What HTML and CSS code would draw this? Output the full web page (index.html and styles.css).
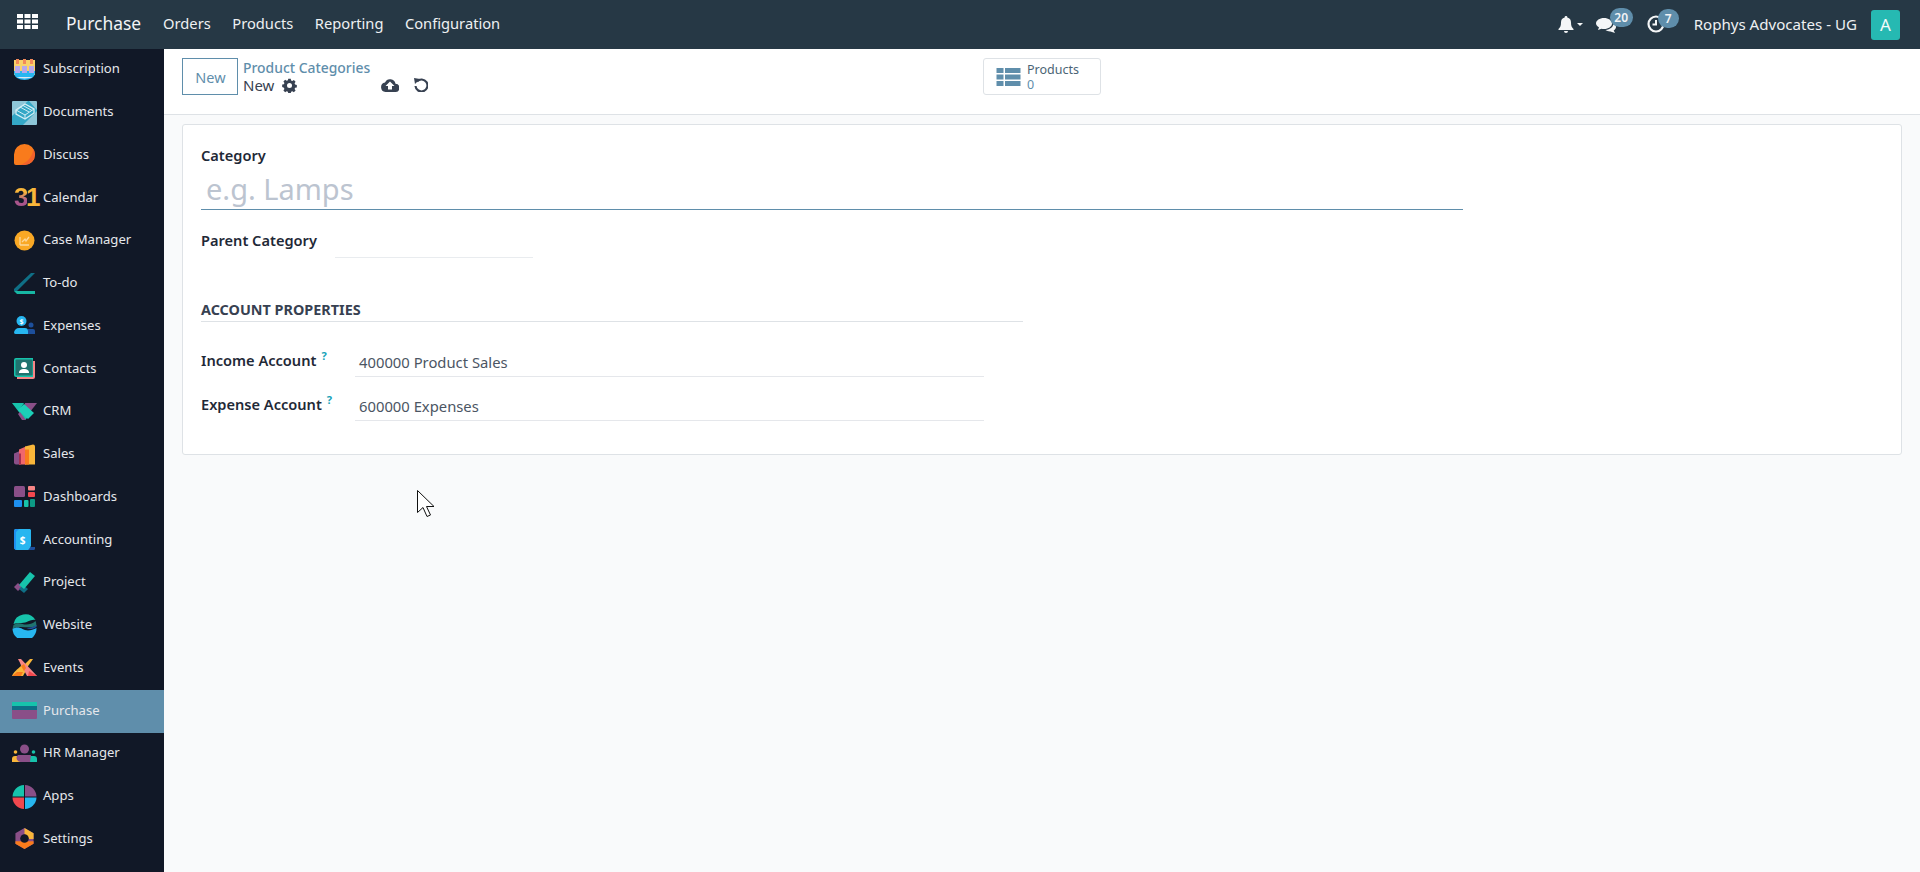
FILE: index.html
```html
<!DOCTYPE html>
<html lang="en">
<head>
<meta charset="utf-8">
<title>Product Categories</title>
<link rel="stylesheet" href="styles.css">
</head>
<body>
<header class="topbar">
  <svg class="apps" viewBox="0 0 21 15" width="21" height="15"><g fill="#fff"><rect x="0" y="0" width="6" height="4"/><rect x="7.500" y="0" width="6" height="4"/><rect x="15" y="0" width="6" height="4"/><rect x="0" y="5.500" width="6" height="4"/><rect x="7.500" y="5.500" width="6" height="4"/><rect x="15" y="5.500" width="6" height="4"/><rect x="0" y="11" width="6" height="4"/><rect x="7.500" y="11" width="6" height="4"/><rect x="15" y="11" width="6" height="4"/></g></svg>
  <span class="brand">Purchase</span>
  <nav class="topnav"><span>Orders</span><span>Products</span><span>Reporting</span><span>Configuration</span></nav>
  <div class="systray">
    <svg class="bell" viewBox="0 0 16 17" width="16" height="17"><path fill="#f4f6f7" d="M8 0a1.300 1.300 0 0 1 1.300 1.500C12 2.100 13 4.200 13 6.500c0 3.500.8 5 2.500 6.500v1H.5v-1C2.200 11.500 3 10 3 6.500c0-2.300 1-4.400 3.700-5A1.300 1.300 0 0 1 8 0zM6 15h4a2 2 0 0 1-4 0z"/></svg>
    <span class="caret"></span>
    <span class="tray-item msg">
      <svg viewBox="0 0 22 17" width="22" height="17"><path fill="#f4f6f7" d="M8 2c4.400 0 8 2.400 8 5.500S12.400 13 8 13c-.9 0-1.700-.1-2.500-.3L2 14l1-2.700C1.200 10.300 0 9 0 7.500 0 4.400 3.600 2 8 2z"/><path fill="#f4f6f7" d="M17.500 7c.2 3.600-3.300 6.600-8 7 1.200 1 3 1.500 5 1.400l4.500 1.600-1.300-2.600c1.500-.9 2.300-2.100 2.300-3.400 0-1.600-1-2.900-2.500-4z"/></svg>
      <b class="badge b20">20</b>
    </span>
    <span class="tray-item act">
      <svg viewBox="0 0 18 18" width="18" height="18"><circle cx="9" cy="9" r="7.500" fill="none" stroke="#f4f6f7" stroke-width="2.200"/><path d="M9 5v4.500H5.500" fill="none" stroke="#f4f6f7" stroke-width="2"/></svg>
      <b class="badge b7">7</b>
    </span>
    <span class="company">Rophys Advocates - UG</span>
    <span class="avatar">A</span>
  </div>
</header>
<div class="main">
  <aside class="sidebar">
    <a class="app"><svg viewBox="0 0 21 21"><rect x="0" y="1" width="21" height="15" fill="#f8d26a"/><path d="M0 12h21v2a10.500 7 0 0 1-21 0z" fill="#27b6f0"/><path d="M2 18h17a10 3 0 0 1-17 0z" fill="#dfe8ee"/><g fill="#b6a8ec"><rect x="1" y="7" width="5" height="7"/><rect x="8" y="7" width="5" height="7"/><rect x="15" y="7" width="5" height="7"/></g><g fill="#f28a5b"><rect x="2" y="0" width="3" height="5"/><rect x="9" y="0" width="3" height="5"/><rect x="16" y="0" width="3" height="5"/></g></svg><span>Subscription</span></a>
    <a class="app"><svg class="wide tall" viewBox="0 0 25 24"><rect width="25" height="24" rx="1" fill="#8ec6d8"/><path d="M0 24V15L16 0h1l8 9v1L11 24z" fill="#34a7c6"/><path d="M4 9l9-6 9 5v4l-9 6-9-5z" fill="none" stroke="#d4eef5" stroke-width="1.300"/><path d="M4 9l9 5 9-6M13 14v4M8 6l9 5M11 4.500l9 5" fill="none" stroke="#d4eef5" stroke-width="1"/></svg><span>Documents</span></a>
    <a class="app"><svg viewBox="0 0 21 21"><path d="M10.500 0A10.500 10.500 0 0 1 21 10.500 10.500 10.500 0 0 1 10.500 21H2a2 2 0 0 1-2-2v-8.500A10.500 10.500 0 0 1 10.500 0z" fill="#f97b1c"/><path d="M21 10.500A10.500 10.500 0 0 1 10.500 21H5C12 20 18 14 19.500 5a10 10 0 0 1 1.500 5.500z" fill="#f2612b"/></svg><span>Discuss</span></a>
    <a class="app"><span class="cal"><i>3</i><em>1</em></span><span>Calendar</span></a>
    <a class="app"><svg viewBox="0 0 21 21"><circle cx="10.500" cy="10.500" r="10" fill="#f9a825"/><path d="M6 15V7M6 15h9M8 12l3-3 1 2 3-4" fill="none" stroke="#fcd79a" stroke-width="1.300"/></svg><span>Case Manager</span></a>
    <a class="app"><svg viewBox="0 0 21 21"><path d="M17 0h4L3 18H0v-2z" fill="#0f6f86"/><path d="M0 18h21v3H3z" fill="#17b7a4"/></svg><span>To-do</span></a>
    <a class="app"><svg viewBox="0 0 21 19"><circle cx="7.500" cy="5" r="5" fill="#27b6f0"/><circle cx="17" cy="9" r="2.500" fill="#1d4f9c"/><path d="M0 17a5 5 0 0 1 5-5h6a3 3 0 0 1 3 3v3H2a2 2 0 0 1-2-1z" fill="#27b6f0"/><path d="M14 13h5a2 2 0 0 1 2 2v3h-7z" fill="#1d4f9c"/><text x="7.500" y="7.500" class="s">$</text></svg><span>Expenses</span></a>
    <a class="app"><svg viewBox="0 0 21 21"><path d="M3 3h18v16a2 2 0 0 1-2 2H3z" fill="#f78586"/><path d="M0 2a2 2 0 0 1 2-2h17v19H2a2 2 0 0 1-2-2z" fill="#17c3ac"/><rect x="1.500" y="1.500" width="17" height="16" rx="1" fill="#20736f"/><circle cx="10" cy="7" r="3" fill="#fff"/><path d="M5 15c0-3 2-4 5-4s5 1 5 4z" fill="#fff"/></svg><span>Contacts</span></a>
    <a class="app"><svg class="wide" viewBox="0 0 25 17"><path d="M0 0h12l-4 6 8 8-3 3z" fill="#17c3ac"/><path d="M13 0h12l-7 9-6-6z" fill="#8a4f88"/><path d="M6 11l4 6h4l-6-8z" fill="#8a4f88"/><path d="M6 7l6-6 10 9-6 6z" fill="#1ccfb8"/></svg><span>CRM</span></a>
    <a class="app"><svg viewBox="0 0 21 20"><path d="M0 9l7-3v14H2a2 2 0 0 1-2-2z" fill="#8a4f88"/><path d="M5 5l7-3v18H5z" fill="#f0676c"/><path d="M5 9h2v11H5z" fill="#a62f4e"/><path d="M11 2l8-2a2 2 0 0 1 2 2v18h-10z" fill="#f9b63a"/><path d="M11 5h4v15h-4z" fill="#f97b1c"/></svg><span>Sales</span></a>
    <a class="app"><svg viewBox="0 0 21 21"><rect width="11" height="11" rx="1.500" fill="#8a4f88"/><rect x="14" y="0" width="7" height="4.500" rx="1" fill="#f78586"/><rect x="14" y="6" width="7" height="5" rx="1" fill="#f2484f"/><rect x="0" y="14" width="8" height="7" rx="1" fill="#1e90f0"/><rect x="10" y="14" width="4.500" height="7" rx="1" fill="#17c3ac"/><rect x="16" y="13" width="5" height="8" rx="1" fill="#0c9a85"/></svg><span>Dashboards</span></a>
    <a class="app"><svg viewBox="0 0 21 21"><path d="M1 21h18a2 2 0 0 0 2-3H5z" fill="#1d4f9c"/><path d="M0 2a2 2 0 0 1 2-2h14a2 2 0 0 1 1 1v16l-2 3a2 2 0 0 1-1 1H3a3 3 0 0 1-3-3z" fill="#27b6f0"/><path d="M0 2a2 2 0 0 1 2-2h15L5 0 2 3v18a3 3 0 0 1-2-3z" fill="#1e90f0"/><text x="8.500" y="15" class="s big">$</text></svg><span>Accounting</span></a>
    <a class="app"><svg viewBox="0 0 21 21"><path d="M0 15l4-4 4 4-4 4z" fill="#8a4f88"/><path d="M5 17l4-4 5 4-4 4z" fill="#0f6f86"/><path d="M16 0l5 4-11 13-5-4z" fill="#17c3ac"/></svg><span>Project</span></a>
    <a class="app"><svg class="wide tall" viewBox="0 0 24 24"><path d="M1 10A12 12 0 0 1 23 6C18 5 15 9 9 9 6 9 3 9 1 10z" fill="#17c3ac"/><path d="M1 11c3-2 6-2 9-1s9 1 13-3a12 12 0 0 1 1 5C19 14 14 13 9 13c-3 0-6 0-9 2z" fill="#20736f"/><path d="M0 15c3-2 7-2 10 0s9 2 14-1a12 12 0 0 1-24 1z" fill="#27b6f0"/><path d="M14 14c4 0 7-1 10-3v2c-3 2-7 3-10 1z" fill="#1d4f9c"/></svg><span>Website</span></a>
    <a class="app"><svg class="wide" viewBox="0 0 25 17"><path d="M8 0l8 8-5 9H0c2-5 5-6 9-10z" fill="#f9b63a"/><path d="M18 0h3L14 10l-3-3z" fill="#f9b63a"/><path d="M6 0h3l16 17H15z" fill="#f78586"/><path d="M9 7l3-2 2 4-2 3z" fill="#f97b1c"/><path d="M0 17l5-4h6l-2 4z" fill="#f97b1c"/><path d="M17 12l8 5h-9z" fill="#f2484f"/></svg><span>Events</span></a>
    <a class="app on"><svg class="wide" viewBox="0 0 25 17"><rect y="0" width="25" height="4" fill="#17c3ac"/><rect y="4" width="25" height="4" fill="#0f6f86"/><path d="M0 8h25v8a1 1 0 0 1-1 1H1a1 1 0 0 1-1-1z" fill="#8a4f88"/></svg><span>Purchase</span></a>
    <a class="app"><svg class="wide" viewBox="0 0 25 17"><circle cx="12.500" cy="4" r="4.500" fill="#8a4f88"/><circle cx="3.500" cy="7" r="1.800" fill="#f9b63a"/><circle cx="21.500" cy="7" r="1.800" fill="#17c3ac"/><path d="M0 17v-3a3 3 0 0 1 3-3h6v6z" fill="#f9b63a"/><path d="M16 11h6a3 3 0 0 1 3 3v3h-9z" fill="#17c3ac"/><path d="M6 10h13l-1 7H9a4 4 0 0 1-3-7z" fill="#8a4f88"/></svg><span>HR Manager</span></a>
    <a class="app"><svg class="wide tall" viewBox="0 0 24 24"><path d="M11.500 0v11.500H0A12 12 0 0 1 11.500 0z" fill="#17c3ac"/><path d="M12.500 0A12 12 0 0 1 24 11.500H12.500z" fill="#8a4f88"/><path d="M0 12.500h11.500V24A12 12 0 0 1 0 12.500z" fill="#f2484f"/><path d="M12.500 12.500H24A12 12 0 0 1 12.500 24z" fill="#27b6f0"/></svg><span>Apps</span></a>
    <a class="app"><svg viewBox="0 0 21 22"><path d="M10.500 0l9.500 5.500v11L10.500 22 1 16.500v-11z" fill="#8a4f88"/><path d="M10.500 0l9.500 5.500v6H15l-4.500-5.500z" fill="#f9b63a"/><path d="M1 14h19v2.500L10.500 22 1 16.500z" fill="#f97b1c"/><circle cx="10.500" cy="11" r="4.500" fill="#111827"/></svg><span>Settings</span></a>
  </aside>
  <div class="content">
    <div class="panel">
      <button class="btn-new">New</button>
      <div class="crumbs">
        <a>Product Categories</a>
        <div class="crumb-cur">New
          <svg class="gear" viewBox="-1 -1 18 18" width="15" height="15"><path fill="#374151" fill-rule="evenodd" d="M6.500 0h3l.4 2.100 1.500.6L13.200 1.500l2.100 2.100-1.200 1.800.6 1.500 2.100.4v3l-2.100.4-.6 1.500 1.200 1.800-2.100 2.100-1.800-1.200-1.500.6-.4 2.100h-3l-.4-2.100-1.500-.6-1.800 1.200-2.100-2.100 1.200-1.800-.6-1.500L-.8 9.800v-3l2.100-.4.600-1.500-1.200-1.800 2.100-2.100 1.800 1.200 1.500-.6zM8 5a3 3 0 1 0 0 6 3 3 0 0 0 0-6z"/></svg>
        </div>
      </div>
      <div class="save-tools">
        <svg viewBox="0 0 18 14" width="18" height="14"><path fill="#374151" d="M14.500 5.800A5.500 5.500 0 0 0 4 4.500 4.800 4.800 0 0 0 4.500 14H14a4 4 0 0 0 .5-8.200zM11 8v3.500H7V8H4.500L9 3.500 13.500 8z"/></svg>
        <svg viewBox="0 0 14 14" width="14" height="14"><path fill="none" stroke="#374151" stroke-width="2.200" d="M3 3.500A6 6 0 1 1 1.500 8"/><path fill="#374151" d="M0 0l6 1-5 5z"/></svg>
      </div>
      <button class="stat">
        <svg viewBox="0 0 24 18" width="25" height="18"><g fill="#5f8eab"><rect width="7" height="5"/><rect y="6.500" width="7" height="5"/><rect y="13" width="7" height="5"/><rect x="8.500" width="15.500" height="5"/><rect x="8.500" y="6.500" width="15.500" height="5"/><rect x="8.500" y="13" width="15.500" height="5"/></g></svg>
        <span class="stat-text"><span>Products</span><b>0</b></span>
      </button>
    </div>
    <div class="sheet-wrap">
      <section class="sheet">
        <label class="lbl title-lbl">Category</label>
        <div class="title-input">e.g. Lamps</div>
        <div class="parent-row"><label class="lbl">Parent Category</label><div class="parent-input"></div></div>
        <h2 class="group">ACCOUNT PROPERTIES</h2>
        <div class="acct"><label class="lbl">Income Account<sup>?</sup></label><div class="val">400000 Product Sales</div></div>
        <div class="acct"><label class="lbl">Expense Account<sup>?</sup></label><div class="val">600000 Expenses</div></div>
      </section>
    </div>
  </div>
</div>
<svg class="cursor" viewBox="0 0 18 27" width="18" height="27"><path d="M.5.500v22l5.500-5 4 9 3.500-1.500-4-8.500H17z" fill="#fff" stroke="#111" stroke-width="1"/></svg>
</body>
</html>
```
FILE: styles.css
```css
* { box-sizing: border-box; }
html, body { margin: 0; height: 100%; }
body { width: 1920px; height: 872px; overflow: hidden; font-family: "Noto Sans", "Open Sans", sans-serif; font-size: 14px; color: #374151; background: #f9fafb; display: flex; flex-direction: column; }
.topbar { height: 49px; flex: none; background: #263845; display: flex; align-items: center; color: #fff; }
.apps { margin: 0 0 6px 17px; }
.brand { margin: -3px 0 0 28px; font-size: 17.400px; color: #f3f4f6; }
.topnav { display: flex; gap: 21.500px; margin: -3px 0 0 22px; font-size: 14.700px; color: #eef0f2; }
.systray { margin-left: auto; display: flex; align-items: center; padding-right: 20px; }
.bell { margin-right: 3px; }
.caret { width: 0; height: 0; border: 3.500px solid transparent; border-top: 3.500px solid #f4f6f7; border-bottom: 0; margin-right: 13px; }
.tray-item { position: relative; display: block; height: 20px; }
.msg { width: 22px; margin-right: 29px; margin-top: 2px; }
.act { width: 18px; margin-right: 29px; }
.badge { position: absolute; height: 19px; border-radius: 10px; background: #5f8eab; color: #f3f4f6; font-size: 12px; font-weight: 600; line-height: 19px; text-align: center; }
.b20 { left: 14px; width: 23px; top: -8px; }
.b7 { left: 11px; width: 21px; top: -6px; }
.company { font-size: 15.100px; color: #eef0f2; margin: -2px 14px 0 0; }
.avatar { width: 29px; height: 30px; border-radius: 3px; background: #26b9b2; color: #f4fbfb; font-size: 17px; display: flex; align-items: center; justify-content: center; }
.main { flex: 1; display: flex; min-height: 0; }
.sidebar { width: 164px; flex: none; background: #111827; display: flex; flex-direction: column; }
.app { height: 42.750px; flex: none; display: flex; align-items: center; gap: 8px; padding-left: 14px; font-size: 13.100px; color: #e5e7eb; position: relative; }
.app > span:last-child { margin-top: -4px; }
.app svg { width: 21px; height: 21px; flex: none; margin-top: -2px; }
.app svg.wide { width: 25px; margin-left: -2px; margin-right: -2px; }
.app svg.tall { height: 24px; margin-top: 0; }
.app.on { background: #5f8eab; }
.s { font: bold 7px "Noto Sans", sans-serif; fill: #fff; text-anchor: middle; }
.s.big { font-size: 10px; }
.cal { width: 21px; height: 21px; flex: none; display: flex; font: bold 26px/21px "Liberation Sans", sans-serif; letter-spacing: -1.500px; margin-top: -2px; }
.cal i { font-style: normal; background: linear-gradient(#f9b63a 25%, #a9558c 65%); -webkit-background-clip: text; background-clip: text; color: transparent; }
.cal em { font-style: normal; color: #f9b63a; margin-left: -1px; }
.content { flex: 1; display: flex; flex-direction: column; min-width: 0; }
.panel { height: 66px; flex: none; background: #fff; border-bottom: 1px solid #dee2e6; display: flex; align-items: flex-start; padding: 9px 0 0 18px; }
.btn-new { width: 56px; height: 37px; padding: 0 0 0 1px; background: #fff; border: 1px solid #5f8eab; color: #5f8eab; font: 14.500px "Noto Sans", sans-serif; }
.crumbs { margin-left: 5px; width: 138px; line-height: 19px; }
.crumbs a { display: block; color: #5f8eab; font-size: 13.900px; font-weight: 500; white-space: nowrap; }
.crumb-cur { font-size: 15px; color: #374151; display: flex; align-items: center; gap: 8px; margin-top: -1px; }
.save-tools { display: flex; gap: 15px; align-items: center; margin: 20px 0 0 0; width: 0; }
.save-tools svg { flex: none; }
.stat { margin-left: 602px; width: 118px; height: 37px; background: #fff; border: 1px solid #dee2e6; border-radius: 3px; display: flex; align-items: center; gap: 6px; padding: 0 0 0 12px; font: 12.500px/15px "Noto Sans", sans-serif; color: #4b6475; }
.stat-text { display: flex; flex-direction: column; align-items: flex-start; margin-top: 1px; }
.stat-text b { font-weight: 400; color: #5f8eab; }
.sheet-wrap { padding: 9px 18px 0; }
.sheet { height: 331px; background: #fff; border: 1px solid #dee2e6; border-radius: 3px; padding: 20px 18px 0; }
.lbl { font-weight: 600; font-size: 14.600px; color: #1f2937; display: block; }
.title-input { width: 1262px; height: 38px; margin-top: 7px; padding-left: 5px; border-bottom: 1px solid #5f8eab; font-size: 29px; line-height: 34px; color: #bcc4d0; }
.parent-row { display: flex; margin-top: 20px; height: 28px; }
.parent-row .lbl { width: 134px; line-height: 20px; }
.parent-input { width: 198px; height: 28px; border-bottom: 1px solid #e9ecef; }
.group { width: 822px; margin: 42px 0 0; padding-bottom: 1px; border-bottom: 1px solid #dee2e6; font-size: 14.400px; line-height: 20px; font-weight: 700; color: #374151; }
.acct { display: flex; height: 44px; }
.group + .acct { margin-top: 18px; }
.acct .lbl { width: 154px; line-height: 20px; padding-top: 10px; white-space: nowrap; }
.lbl sup { color: #17a2b8; font-size: 11px; font-weight: 700; margin-left: 5px; vertical-align: 6px; line-height: 0; }
.val { width: 629px; height: 37px; padding: 12px 0 0 4px; border-bottom: 1px solid #e5e7eb; font-size: 14.800px; line-height: 20px; color: #4b5563; }
.cursor { position: absolute; left: 417px; top: 490px; }
```
